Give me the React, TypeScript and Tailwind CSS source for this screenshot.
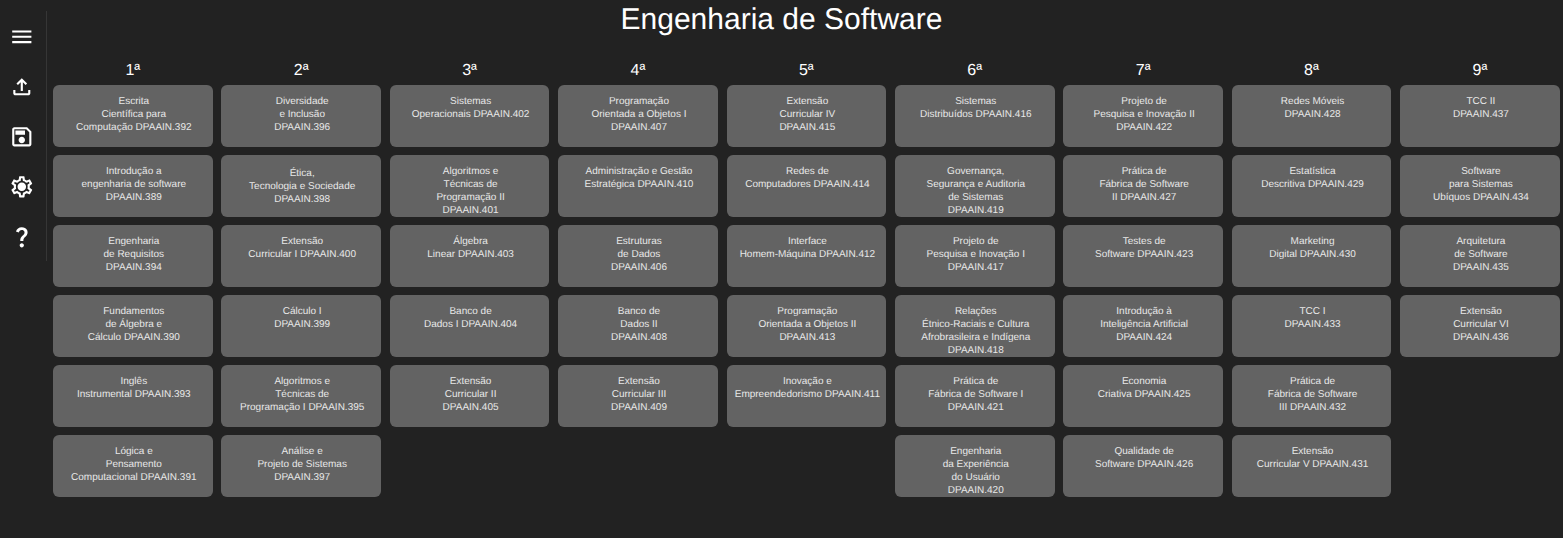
const columns: string[][][] = [
  [
    ["Escrita", "Científica para", "Computação DPAAIN.392"],
    ["Introdução a", "engenharia de software", "DPAAIN.389"],
    ["Engenharia", "de Requisitos", "DPAAIN.394"],
    ["Fundamentos", "de Álgebra e", "Cálculo DPAAIN.390"],
    ["Inglês", "Instrumental DPAAIN.393"],
    ["Lógica e", "Pensamento", "Computacional DPAAIN.391"],
  ],
  [
    ["Diversidade", "e Inclusão", "DPAAIN.396"],
    ["Ética,", "Tecnologia e Sociedade", "DPAAIN.398"],
    ["Extensão", "Curricular I DPAAIN.400"],
    ["Cálculo I", "DPAAIN.399"],
    ["Algoritmos e", "Técnicas de", "Programação I DPAAIN.395"],
    ["Análise e", "Projeto de Sistemas", "DPAAIN.397"],
  ],
  [
    ["Sistemas", "Operacionais DPAAIN.402"],
    ["Algoritmos e", "Técnicas de", "Programação II", "DPAAIN.401"],
    ["Álgebra", "Linear DPAAIN.403"],
    ["Banco de", "Dados I DPAAIN.404"],
    ["Extensão", "Curricular II", "DPAAIN.405"],
  ],
  [
    ["Programação", "Orientada a Objetos I", "DPAAIN.407"],
    ["Administração e Gestão", "Estratégica DPAAIN.410"],
    ["Estruturas", "de Dados", "DPAAIN.406"],
    ["Banco de", "Dados II", "DPAAIN.408"],
    ["Extensão", "Curricular III", "DPAAIN.409"],
  ],
  [
    ["Extensão", "Curricular IV", "DPAAIN.415"],
    ["Redes de", "Computadores DPAAIN.414"],
    ["Interface", "Homem-Máquina DPAAIN.412"],
    ["Programação", "Orientada a Objetos II", "DPAAIN.413"],
    ["Inovação e", "Empreendedorismo DPAAIN.411"],
  ],
  [
    ["Sistemas", "Distribuídos DPAAIN.416"],
    ["Governança,", "Segurança e Auditoria", "de Sistemas", "DPAAIN.419"],
    ["Projeto de", "Pesquisa e Inovação I", "DPAAIN.417"],
    ["Relações", "Étnico-Raciais e Cultura", "Afrobrasileira e Indígena", "DPAAIN.418"],
    ["Prática de", "Fábrica de Software I", "DPAAIN.421"],
    ["Engenharia", "da Experiência", "do Usuário", "DPAAIN.420"],
  ],
  [
    ["Projeto de", "Pesquisa e Inovação II", "DPAAIN.422"],
    ["Prática de", "Fábrica de Software", "II DPAAIN.427"],
    ["Testes de", "Software DPAAIN.423"],
    ["Introdução à", "Inteligência Artificial", "DPAAIN.424"],
    ["Economia", "Criativa DPAAIN.425"],
    ["Qualidade de", "Software DPAAIN.426"],
  ],
  [
    ["Redes Móveis", "DPAAIN.428"],
    ["Estatística", "Descritiva DPAAIN.429"],
    ["Marketing", "Digital DPAAIN.430"],
    ["TCC I", "DPAAIN.433"],
    ["Prática de", "Fábrica de Software", "III DPAAIN.432"],
    ["Extensão", "Curricular V DPAAIN.431"],
  ],
  [
    ["TCC II", "DPAAIN.437"],
    ["Software", "para Sistemas", "Ubíquos DPAAIN.434"],
    ["Arquitetura", "de Software", "DPAAIN.435"],
    ["Extensão", "Curricular VI", "DPAAIN.436"],
  ],
];

const icons = [
  "M3 18h18v-2H3v2zm0-5h18v-2H3v2zm0-7v2h18V6H3z",
  "M18 15v3H6v-3H4v3c0 1.1.9 2 2 2h12c1.1 0 2-.9 2-2v-3h-2zM7 9l1.41 1.41L11 7.83V16h2V7.83l2.59 2.58L17 9l-5-5-5 5z",
  "M17 3H5c-1.11 0-2 .9-2 2v14c0 1.1.89 2 2 2h14c1.1 0 2-.9 2-2V7l-4-4zm2 16H5V5h11.17L19 7.83V19zm-7-7c-1.66 0-3 1.34-3 3s1.34 3 3 3 3-1.34 3-3-1.34-3-3-3zM6 6h9v4H6z",
  "M19.43 12.98c.04-.32.07-.64.07-.98 0-.34-.03-.66-.07-.98l2.11-1.65c.19-.15.24-.42.12-.64l-2-3.46c-.09-.16-.26-.25-.44-.25-.06 0-.12.01-.17.03l-2.49 1c-.52-.4-1.08-.73-1.69-.98l-.38-2.65C14.46 2.18 14.25 2 14 2h-4c-.25 0-.46.18-.49.42l-.38 2.65c-.61.25-1.17.59-1.69.98l-2.49-1c-.06-.02-.12-.03-.18-.03-.17 0-.34.09-.43.25l-2 3.46c-.13.22-.07.49.12.64l2.11 1.65c-.04.32-.07.65-.07.98 0 .33.03.66.07.98l-2.11 1.65c-.19.15-.24.42-.12.64l2 3.46c.09.16.26.25.44.25.06 0 .12-.01.17-.03l2.49-1c.52.4 1.08.73 1.69.98l.38 2.65c.03.24.24.42.49.42h4c.25 0 .46-.18.49-.42l.38-2.65c.61-.25 1.17-.59 1.69-.98l2.49 1c.06.02.12.03.18.03.17 0 .34-.09.43-.25l2-3.46c.12-.22.07-.49-.12-.64l-2.11-1.65zm-1.98-1.71c.04.31.05.52.05.73 0 .21-.02.43-.05.73l-.14 1.13.89.7 1.08.84-.7 1.21-1.27-.51-1.04-.42-.9.68c-.43.32-.84.56-1.25.73l-1.06.43-.16 1.13-.2 1.35h-1.4l-.19-1.35-.16-1.13-1.06-.43c-.43-.18-.83-.41-1.23-.71l-.91-.7-1.06.43-1.27.51-.7-1.21 1.08-.84.89-.7-.14-1.13c-.03-.31-.05-.54-.05-.74s.02-.43.05-.73l.14-1.13-.89-.7-1.08-.84.7-1.21 1.27.51 1.04.42.9-.68c.43-.32.84-.56 1.25-.73l1.06-.43.16-1.13.2-1.35h1.39l.19 1.35.16 1.13 1.06.43c.43.18.83.41 1.23.71l.91.7 1.06-.43 1.27-.51.7 1.21-1.07.85-.89.7.14 1.13zM12 8c-2.21 0-4 1.79-4 4s1.79 4 4 4 4-1.79 4-4-1.79-4-4-4z",
  "M11.07 12.85c.77-1.39 2.25-2.21 3.11-3.44.91-1.29.4-3.7-2.18-3.7-1.69 0-2.52 1.28-2.87 2.34L6.54 6.96C7.25 4.83 9.18 3 11.99 3c2.35 0 3.96 1.07 4.78 2.41.7 1.15 1.11 3.3.03 4.9-1.2 1.77-2.35 2.31-2.97 3.45-.25.46-.35.76-.35 2.24h-2.89c-.01-.78-.13-2.05.48-3.15zM14 20c0 1.1-.9 2-2 2s-2-.9-2-2 .9-2 2-2 2 .9 2 2z",
];

export default function App() {
  return (
    <div className="relative h-[538px] overflow-hidden bg-[#222222] font-['Liberation_Sans',Arial,sans-serif] text-white [text-rendering:geometricPrecision]">
      {/* the side rail sits over the page, the title is centred on the whole width */}
      <nav className="absolute left-0 top-[11px] flex h-[250px] w-[47px] flex-col border-r border-[#363636] pr-[2px] pt-[0.7px]">
        {icons.map((d) => (
          <div key={d} className="flex h-[50px] shrink-0 items-center justify-center">
            <svg viewBox="0 0 24 24" className="h-[25.6px] w-[25.6px] fill-white">
              <path d={d} />
            </svg>
          </div>
        ))}
      </nav>

      <h1 className="h-[40px] text-center text-[30px] leading-[40px]">Engenharia de Software</h1>

      <main className="grid grid-cols-[repeat(9,159.6px)] gap-x-[8.8px] pl-[53px] pt-[19px]">
        {columns.map((col, i) => (
          <section key={i} className="flex min-w-0 flex-col gap-2">
            <h2 className="h-[18px] pt-[3px] text-center text-base leading-[18px]">{i + 1}ª</h2>
            {col.map((lines) => (
              <div
                key={lines.join()}
                className={`h-[62px] overflow-hidden rounded-[6px] bg-[#636363] pl-[2px] text-center text-[10px] leading-[13px] text-[#e8e8e8] ${
                  lines[0] === "Ética," ? "pt-[12px]" : "pt-[10px]"
                }`}
              >
                {lines.map((line) => (
                  <div key={line} className="whitespace-nowrap">
                    {line}
                  </div>
                ))}
              </div>
            ))}
          </section>
        ))}
      </main>
    </div>
  );
}
